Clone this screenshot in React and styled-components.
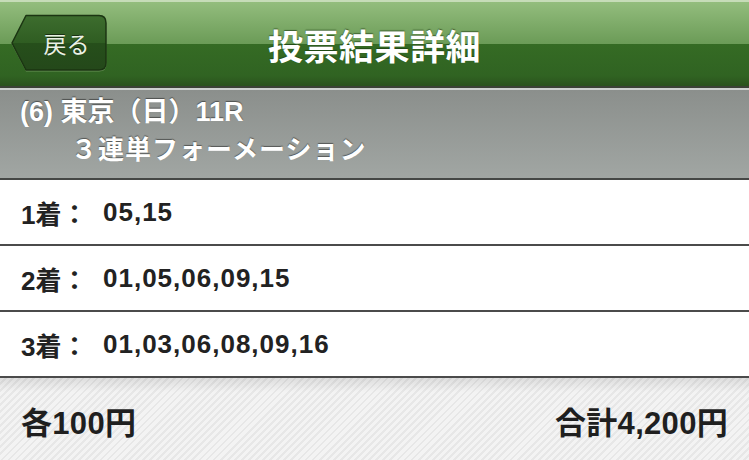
import React from "react";
import styled, { createGlobalStyle } from "styled-components";

const GlobalStyle = createGlobalStyle`
  html, body {
    margin: 0;
    padding: 0;
    background: #ffffff;
  }
  body {
    font-family: "Liberation Sans", "Noto Sans CJK JP", sans-serif;
    -webkit-font-smoothing: antialiased;
  }
`;

const Page = styled.div`
  width: 749px;
  height: 460px;
  overflow: hidden;
  display: flex;
  flex-direction: column;
`;

const NavBar = styled.header`
  position: relative;
  flex: none;
  height: 88px;
  box-sizing: border-box;
  display: flex;
  align-items: center;
  justify-content: center;
  border-top: 2px solid #c6dcb8;
  border-bottom: 2px solid #3b4236;
  background: linear-gradient(
    to bottom,
    #93bd7d 0%,
    #6b9b57 50%,
    #356b24 50%,
    #306322 88%,
    #2a521d 100%
  );
`;

const Title = styled.h1`
  margin: 0;
  font-family: "Noto Sans CJK JP", sans-serif;
  font-size: 35px;
  font-weight: 700;
  color: #ffffff;
  letter-spacing: 0.5px;
  text-shadow: 0 -1px 1px rgba(20, 50, 10, 0.6);
`;

const BackButton = styled.button`
  position: absolute;
  left: 10px;
  top: 11px;
  width: 99px;
  height: 60px;
  padding: 0 0 0 14px;
  border: none;
  background: none;
  display: flex;
  align-items: center;
  justify-content: center;
  cursor: pointer;
`;

const BackShape = styled.svg`
  position: absolute;
  left: 0;
  top: 0;
`;

const BackLabel = styled.span`
  position: relative;
  font-family: "Noto Sans CJK JP", sans-serif;
  font-size: 23px;
  color: #e9f1e4;
  text-shadow: 0 -1px 0 rgba(0, 0, 0, 0.5);
`;

const RaceBar = styled.section`
  flex: none;
  height: 92px;
  box-sizing: border-box;
  border-top: 2px solid #cdd1cf;
  border-bottom: 2px solid #454745;
  background: linear-gradient(to bottom, #8b8f8c, #a1a6a3);
  padding: 3px 0 0 20px;
  color: #ffffff;
  font-weight: 700;
  line-height: 38px;
  text-shadow: 0 -1px 1px rgba(0, 0, 0, 0.45);
`;

const RaceLine = styled.div`
  padding-left: ${(p) => p.indent || 0}px;
  font-size: ${(p) => p.size || 27}px;
  letter-spacing: ${(p) => p.spacing || 0}px;
  white-space: nowrap;
`;

const Row = styled.div`
  flex: none;
  height: 66px;
  box-sizing: border-box;
  display: flex;
  align-items: center;
  padding-left: 21px;
  border-bottom: 2px solid #4b4b4b;
  color: #222222;
  font-weight: 700;
  font-size: 26px;
`;

const Place = styled.span`
  width: 82px;
  flex: none;
  white-space: nowrap;
`;

const Numbers = styled.span`
  letter-spacing: 1px;
`;

const Footer = styled.footer`
  flex: 1;
  display: flex;
  align-items: center;
  justify-content: space-between;
  padding: 2px 21px 0;
  color: #1f1f1f;
  font-weight: 700;
  font-size: 31px;
  letter-spacing: 0.3px;
  background:
    linear-gradient(to bottom, rgba(0, 0, 0, 0.09), rgba(0, 0, 0, 0) 14px),
    repeating-linear-gradient(
      135deg,
      #f3f3f3 0px,
      #f3f3f3 3px,
      #e7e7e7 3px,
      #e7e7e7 5px
    );
`;

const BackIcon = () => (
  <BackShape width="99" height="60" viewBox="0 0 99 60">
    <defs>
      <linearGradient id="backFill" x1="0" y1="0" x2="0" y2="1">
        <stop offset="0" stopColor="#3d6d2e" />
        <stop offset="0.5" stopColor="#2f5d22" />
        <stop offset="0.5" stopColor="#264f1b" />
        <stop offset="1" stopColor="#24481a" />
      </linearGradient>
    </defs>
    <path
      d="M16 3.5 L89 3.5 Q96.5 3.5 96.5 11 L96.5 50 Q96.5 57.5 89 57.5 L16 57.5 L1.8 30.5 Z"
      fill="rgba(200,230,180,0.35)"
      transform="translate(0 1)"
    />
    <path
      d="M16 2.5 L89 2.5 Q96 2.5 96 10 L96 50 Q96 57 89 57 L16 57 L2 30 Z"
      fill="url(#backFill)"
      stroke="#1b3512"
      strokeWidth="1.5"
      strokeLinejoin="round"
    />
  </BackShape>
);

const places = [
  { label: "1着：", nums: "05,15" },
  { label: "2着：", nums: "01,05,06,09,15" },
  { label: "3着：", nums: "01,03,06,08,09,16" },
];

const App = () => {
  return (
    <Page>
      <GlobalStyle />
      <NavBar>
        <BackButton type="button" aria-label="戻る">
          <BackIcon />
          <BackLabel>戻る</BackLabel>
        </BackButton>
        <Title>投票結果詳細</Title>
      </NavBar>
      <RaceBar>
        <RaceLine>(6) 東京（日）11R</RaceLine>
        <RaceLine indent={51} size={26} spacing={1}>
          ３連単フォーメーション
        </RaceLine>
      </RaceBar>
      {places.map((p) => (
        <Row key={p.label}>
          <Place>{p.label}</Place>
          <Numbers>{p.nums}</Numbers>
        </Row>
      ))}
      <Footer>
        <span>各100円</span>
        <span>合計4,200円</span>
      </Footer>
    </Page>
  );
};

export default App;
